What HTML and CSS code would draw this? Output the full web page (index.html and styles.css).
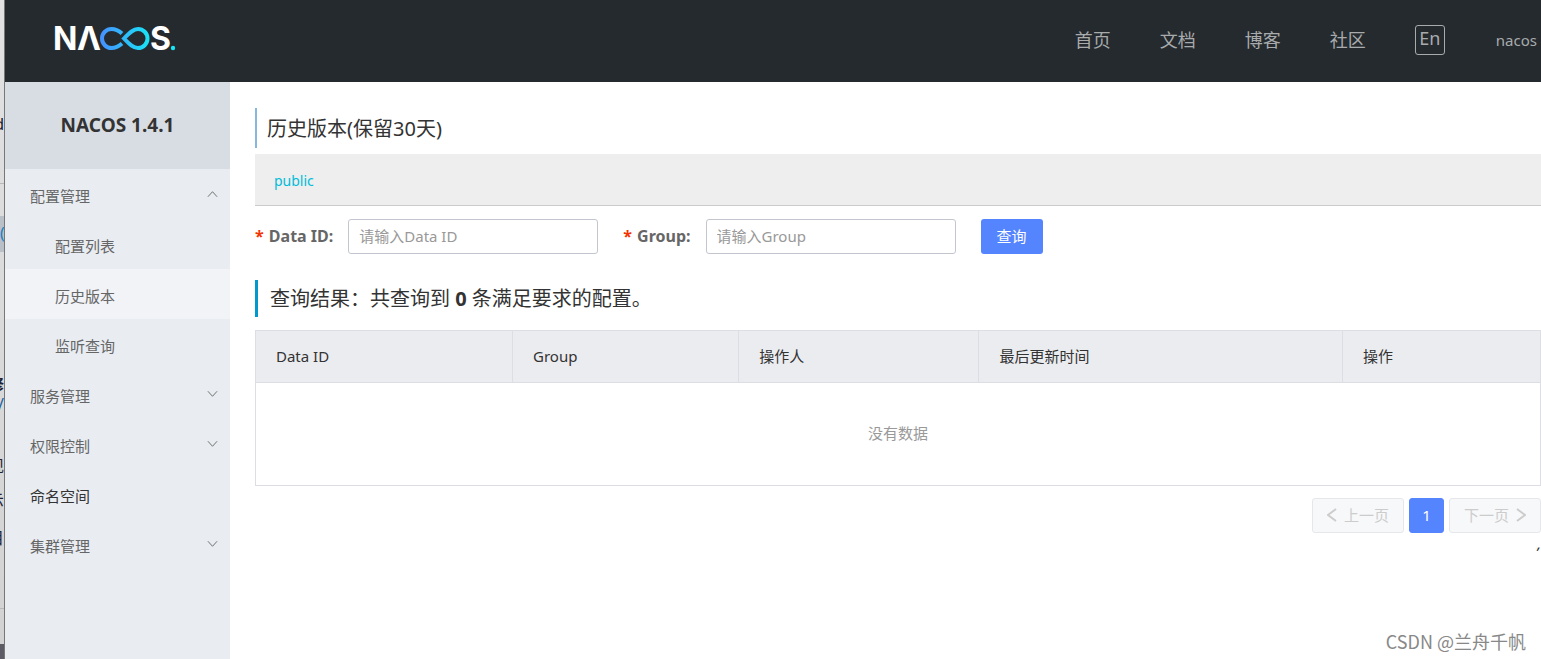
FILE: index.html
```html
<!DOCTYPE html>
<html lang="zh-CN">
<head>
<meta charset="utf-8">
<title>Nacos</title>
<link rel="stylesheet" href="styles.css">
</head>
<body>
<div class="screen">
  <div class="edge" aria-hidden="true">
    <span class="frag frag-d">d</span>
    <span class="edge-line line-a"></span>
    <span class="frag-sel">(</span>
    <span class="frag frag-a">修</span>
    <span class="frag frag-slash">/</span>
    <span class="frag frag-b">现</span>
    <span class="frag frag-c">示</span>
    <span class="frag frag-e">目</span>
    <span class="edge-line line-b"></span>
    <span class="edge-foot"></span>
  </div>
  <div class="app">
    <header class="header">
      <a class="logo" href="#" aria-label="Nacos">
        <svg width="122" height="26" viewBox="0 0 122 26">
          <defs>
            <linearGradient id="g" gradientUnits="userSpaceOnUse" x1="45" y1="0" x2="95" y2="0">
              <stop offset="0" stop-color="#4690ff"/><stop offset="1" stop-color="#17e6f5"/>
            </linearGradient>
          </defs>
          <text class="mark" x="-2" y="25">N</text>
          <text class="mark" x="22" y="25">Λ</text>
          <text class="mark" x="95" y="25">S</text>
          <path d="M67 8.500C63 5 60 4 56.500 4A9.500 9.500 0 0 0 56.500 23C60 23 63 22 67 18.500" fill="none" stroke="url(#g)" stroke-width="4"/>
          <path d="M69 13.500C75 7 78.500 4 83 4A9.500 9.500 0 0 1 83 23C78.500 23 75 20 69 13.500Z" fill="none" stroke="url(#g)" stroke-width="4"/>
          <circle cx="118" cy="23" r="2.200" fill="#17e6f5"/>
        </svg>
      </a>
      <nav class="nav">
        <a href="#">首页</a><a href="#">文档</a><a href="#">博客</a><a href="#">社区</a>
        <button class="lang" type="button">En</button>
        <a class="user" href="#">nacos</a>
      </nav>
    </header>
    <div class="body">
      <aside class="side">
        <h1 class="version">NACOS 1.4.1</h1>
        <ul class="menu">
          <li><button type="button" class="item">配置管理<svg class="chev" viewBox="0 0 12 8"><path d="M1 7L6 1.500L11 7"/></svg></button></li>
          <li><a class="item sub" href="#">配置列表</a></li>
          <li><a class="item sub active" href="#">历史版本</a></li>
          <li><a class="item sub" href="#">监听查询</a></li>
          <li><button type="button" class="item">服务管理<svg class="chev" viewBox="0 0 12 8"><path d="M1 1L6 6.500L11 1"/></svg></button></li>
          <li><button type="button" class="item">权限控制<svg class="chev" viewBox="0 0 12 8"><path d="M1 1L6 6.500L11 1"/></svg></button></li>
          <li><a class="item dark" href="#">命名空间</a></li>
          <li><button type="button" class="item">集群管理<svg class="chev" viewBox="0 0 12 8"><path d="M1 1L6 6.500L11 1"/></svg></button></li>
        </ul>
      </aside>
      <main class="main">
        <h2 class="title">历史版本(保留30天)</h2>
        <div class="ns"><a href="#">public</a></div>
        <form class="form">
          <label for="data-id"><span class="req">*</span> Data ID:</label>
          <input id="data-id" type="text" placeholder="请输入Data ID">
          <label for="group"><span class="req">*</span> Group:</label>
          <input id="group" type="text" placeholder="请输入Group">
          <button class="primary" type="button">查询</button>
        </form>
        <h3 class="result">查询结果：共查询到 <strong>0</strong> 条满足要求的配置。</h3>
        <table class="table">
          <colgroup><col class="c1"><col class="c2"><col class="c3"><col class="c4"><col></colgroup>
          <thead><tr><th>Data ID</th><th>Group</th><th>操作人</th><th>最后更新时间</th><th>操作</th></tr></thead>
          <tbody><tr><td colspan="5">没有数据</td></tr></tbody>
        </table>
        <div class="pager">
          <button type="button" disabled><svg viewBox="0 0 10 14"><path d="M9 1L1 7L9 13"/></svg>上一页</button>
          <button type="button" class="current">1</button>
          <button type="button" disabled>下一页<svg viewBox="0 0 10 14"><path d="M1 1L9 7L1 13"/></svg></button>
        </div>
        <div class="stray">,</div>
      </main>
    </div>
  </div>
  <div class="watermark">CSDN @兰舟千帆</div>
</div>
</body>
</html>
```
FILE: styles.css
```css
* { box-sizing: border-box; }
body {
  margin: 0;
  font: 15px/20px "Noto Sans", "Noto Sans CJK SC", sans-serif;
  color: #333;
  background: #fff;
}
a { color: inherit; text-decoration: none; }
button, input { font: inherit; color: inherit; margin: 0; }
.screen { position: relative; display: flex; min-height: 100vh; overflow: hidden; }

.edge {
  position: relative;
  flex: none;
  width: 5px;
  overflow: hidden;
  background: linear-gradient(#e2e2e2, #d2d2d2);
  border-right: 1px solid #777;
}
.frag, .frag-sel { position: absolute; right: 0; font-size: 16px; line-height: 20px; color: #223; }
.frag-d { top: 114px; }
.frag-sel { top: 216px; width: 4px; height: 36px; line-height: 34px; background: #b9c0c8; color: #1a7fc0; }
.frag-a { top: 374px; font-weight: 700; }
.frag-slash { top: 394px; color: #1a5fa0; }
.frag-b { top: 456px; }
.frag-c { top: 490px; }
.frag-e { top: 528px; }
.edge-line { position: absolute; left: 0; width: 4px; height: 1px; background: #b8b8b8; }
.line-a { top: 183px; }
.line-b { top: 608px; }
.edge-foot { position: absolute; left: 0; bottom: 0; width: 4px; height: 15px; background: #5d5b63; }

.app { flex: 1; min-width: 0; display: flex; flex-direction: column; }
.header {
  display: flex;
  align-items: center;
  justify-content: space-between;
  height: 82px;
  padding: 0 4px 2px 50px;
  background: #252a2f;
}
.logo { display: block; height: 26px; margin-bottom: 4px; }
.logo svg { display: block; overflow: visible; }
.mark { font: 700 32px Inter, sans-serif; fill: #fff; }
.nav { display: flex; align-items: center; gap: 49px; font-size: 18px; color: #a8aaac; }
.lang {
  width: 30px;
  height: 30px;
  padding: 0 0 4px;
  line-height: 24px;
  border: 1px solid #a8aaac;
  border-radius: 3px;
  background: none;
}
.user { font-size: 15px; margin-left: 2px; }

.body { flex: 1; display: flex; }
.side { flex: none; width: 225px; background: #e9edf2; }
.version {
  margin: 0;
  height: 87px;
  line-height: 87px;
  font-size: 19px;
  text-align: center;
  background: #d8dde4;
}
.menu { list-style: none; margin: 0; padding: 0; }
.item {
  display: flex;
  align-items: center;
  justify-content: space-between;
  width: 100%;
  height: 50px;
  padding: 4px 12px 0 25px;
  border: 0;
  background: none;
  color: #666;
}
.sub { padding-left: 50px; }
.active { background: #f1f3f7; }
.dark { color: #333; }
.chev { width: 11px; height: 8px; margin-bottom: 4px; fill: none; stroke: #666; }

.main { flex: 1; min-width: 0; padding: 26px 0 0 25px; }
.title {
  margin: 0 0 6px;
  padding: 2px 0 0 10px;
  font-size: 20px;
  font-weight: 400;
  line-height: 38px;
  border-left: 2px solid #86b7dd;
}
.ns { height: 52px; padding: 2px 19px 0; font-size: 14px; line-height: 50px; background: #eee; border-bottom: 1px solid #ccc; color: #00bcd9; }
.form { display: flex; align-items: center; margin-top: 13px; }
.form label { margin-right: 15px; padding-bottom: 2px; font-size: 16px; font-weight: 700; color: #666; }
.req { color: #f33300; margin-right: 1px; }
.form input {
  width: 250px;
  height: 35px;
  margin-right: 25px;
  padding: 0 10px 2px;
  border: 1px solid #c4c6cf;
  border-radius: 3px;
  background: #fff;
}
.form input::placeholder { color: #999; opacity: 1; }
.primary { width: 62px; height: 35px; padding: 0 0 2px; border: 0; border-radius: 3px; background: #5584ff; color: #fff; }
.result {
  margin: 26px 0 13px;
  padding-left: 12px;
  font-size: 20px;
  font-weight: 400;
  line-height: 37px;
  border-left: 3px solid #09c;
}
.table { width: 100%; table-layout: fixed; border-collapse: collapse; border: 1px solid #dcdee3; }
.c1 { width: 20%; }
.c2 { width: 17.6%; }
.c3 { width: 18.7%; }
.c4 { width: 28.3%; }
.table th { height: 52px; padding: 0 20px 2px; text-align: left; font-weight: 400; background: #ebecf0; border: 1px solid #dcdee3; }
.table td { height: 103px; padding: 0 0 2px; text-align: center; color: #999; }
.pager { display: flex; justify-content: flex-end; gap: 5px; margin-top: 12px; }
.pager button {
  display: flex;
  align-items: center;
  justify-content: center;
  gap: 7px;
  width: 92px;
  height: 35px;
  padding: 0 0 2px;
  border: 1px solid #e6e7eb;
  border-radius: 3px;
  background: #f7f8fa;
  color: #ccc;
}
.pager .current { width: 35px; border-color: #5584ff; background: #5584ff; color: #fff; }
.pager svg { width: 10px; height: 14px; fill: none; stroke: #ccc; stroke-width: 2; }
.stray { text-align: right; font-style: italic; line-height: 20px; }
.watermark { position: absolute; right: 15px; bottom: 6px; font-size: 18px; line-height: 24px; color: #888; font-family: "Noto Sans CJK SC", sans-serif; }
```
